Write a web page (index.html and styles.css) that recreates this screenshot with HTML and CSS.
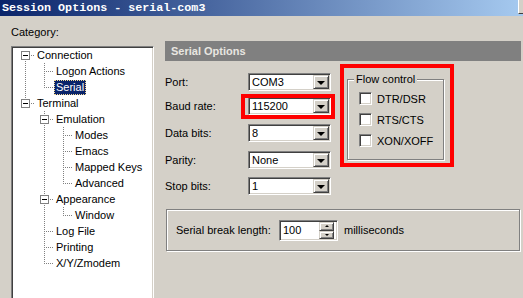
FILE: index.html
```html
<!DOCTYPE html>
<html lang="en">
<head>
  <meta charset="UTF-8">
  <title>Session Options - serial-com3</title>
  <link rel="stylesheet" href="styles.css">
</head>
<body>
  <div class="titlebar">
    <span class="title">Session Options - serial-com3</span>
    <span class="titlebtn"></span>
  </div>

  <div class="dialog">
    <div class="category">
      <div class="cat-label">Category:</div>
      <div class="tree">
        <div class="node"><span class="ln first"><span class="exp"></span></span><span class="text">Connection</span></div>
        <div class="node"><span class="ln pipe"></span><span class="ln tee"></span><span class="text">Logon Actions</span></div>
        <div class="node"><span class="ln pipe"></span><span class="ln corner"></span><span class="text selected">Serial</span></div>
        <div class="node"><span class="ln corner"><span class="exp"></span></span><span class="text">Terminal</span></div>
        <div class="node"><span class="ln"></span><span class="ln tee"><span class="exp"></span></span><span class="text">Emulation</span></div>
        <div class="node"><span class="ln"></span><span class="ln pipe"></span><span class="ln tee"></span><span class="text">Modes</span></div>
        <div class="node"><span class="ln"></span><span class="ln pipe"></span><span class="ln tee"></span><span class="text">Emacs</span></div>
        <div class="node"><span class="ln"></span><span class="ln pipe"></span><span class="ln tee"></span><span class="text">Mapped Keys</span></div>
        <div class="node"><span class="ln"></span><span class="ln pipe"></span><span class="ln corner"></span><span class="text">Advanced</span></div>
        <div class="node"><span class="ln"></span><span class="ln tee"><span class="exp"></span></span><span class="text">Appearance</span></div>
        <div class="node"><span class="ln"></span><span class="ln pipe"></span><span class="ln corner"></span><span class="text">Window</span></div>
        <div class="node"><span class="ln"></span><span class="ln tee"></span><span class="text">Log File</span></div>
        <div class="node"><span class="ln"></span><span class="ln tee"></span><span class="text">Printing</span></div>
        <div class="node"><span class="ln"></span><span class="ln corner"></span><span class="text">X/Y/Zmodem</span></div>
      </div>
    </div>

    <div class="options">
      <div class="panel-head">Serial Options</div>

      <div class="settings">
        <div class="fields">
          <span class="field-label">Port:</span>
          <span class="combo"><span class="value">COM3</span><span class="drop"></span></span>

          <span class="field-label">Baud rate:</span>
          <span class="combo"><span class="value">115200</span><span class="drop"></span><span class="mark baud-mark"></span></span>

          <span class="field-label">Data bits:</span>
          <span class="combo"><span class="value">8</span><span class="drop"></span></span>

          <span class="field-label">Parity:</span>
          <span class="combo"><span class="value">None</span><span class="drop"></span></span>

          <span class="field-label">Stop bits:</span>
          <span class="combo"><span class="value">1</span><span class="drop"></span></span>
        </div>

        <div class="flow-wrap">
          <fieldset class="flow">
            <legend>Flow control</legend>
            <label class="check"><span class="checkbox"></span>DTR/DSR</label>
            <label class="check"><span class="checkbox"></span>RTS/CTS</label>
            <label class="check"><span class="checkbox"></span>XON/XOFF</label>
          </fieldset>
          <span class="mark flow-mark"></span>
        </div>
      </div>

      <div class="break-group">
        <span class="break-label">Serial break length:</span>
        <span class="spin">
          <span class="value">100</span>
          <span class="spin-btns">
            <span class="spin-btn up"></span>
            <span class="spin-btn down"></span>
          </span>
        </span>
        <span class="unit">milliseconds</span>
      </div>
    </div>
  </div>
</body>
</html>
```

FILE: styles.css
```css
body {
  margin: 0;
  width: 523px;
  height: 298px;
  overflow: hidden;
  background-color: #d4d0c8;
  font-family: "Liberation Sans", Arial, sans-serif;
  font-size: 11px;
  color: #000;
}

/* title bar */
.titlebar {
  height: 16px;
  display: flex;
  justify-content: space-between;
  background: linear-gradient(to right, #0a246a, #a6caf0);
}
.title {
  padding: 1px 0 0 2px;
  font-family: "Liberation Mono", "Courier New", monospace;
  font-weight: bold;
  font-size: 11.7px;
  line-height: 14px;
  color: #fff;
  white-space: nowrap;
}
.titlebtn {
  width: 4px;
  height: 13px;
  background-color: #d4d0c8;
  border-left: 1px solid #fff;
  border-bottom: 1px solid #404040;
}

.dialog {
  display: flex;
  gap: 11px;
  height: 282px;
  padding-left: 11px;
}

/* category tree */
.category {
  width: 143px;
  display: flex;
  flex-direction: column;
}
.cat-label {
  padding-top: 9px;
  line-height: 14px;
}
.tree {
  flex: 1;
  margin-top: 7px;
  box-sizing: border-box;
  background-color: #fff;
  border: 1px solid;
  border-bottom: none;
  border-color: #808080 #fff #fff #808080;
  box-shadow: inset 1px 1px #404040, inset -1px 0 #d4d0c8;
  padding: 0 1px;
}
.node {
  display: flex;
  height: 16px;
  align-items: center;
}
.ln {
  width: 19px;
  height: 16px;
  flex-shrink: 0;
  box-sizing: border-box;
  display: flex;
  align-items: center;
  padding-left: 8px;
  background-repeat: no-repeat;
}
.ln.tee,
.ln.corner,
.ln.first {
  width: 22px;
}
.pipe {
  background-image: repeating-linear-gradient(#808080 0 1px, transparent 1px 2px);
  background-position: 12px 0;
  background-size: 1px 16px;
}
.tee {
  background-image:
    repeating-linear-gradient(#808080 0 1px, transparent 1px 2px),
    repeating-linear-gradient(to right, #808080 0 1px, transparent 1px 2px);
  background-position: 12px 0, 12px 8px;
  background-size: 1px 16px, 10px 1px;
}
.corner {
  background-image:
    repeating-linear-gradient(#808080 0 1px, transparent 1px 2px),
    repeating-linear-gradient(to right, #808080 0 1px, transparent 1px 2px);
  background-position: 12px 0, 12px 8px;
  background-size: 1px 8px, 10px 1px;
}
.first {
  background-image:
    repeating-linear-gradient(#808080 0 1px, transparent 1px 2px),
    repeating-linear-gradient(to right, #808080 0 1px, transparent 1px 2px);
  background-position: 12px 8px, 12px 8px;
  background-size: 1px 8px, 10px 1px;
}
.exp {
  width: 9px;
  height: 9px;
  box-sizing: border-box;
  border: 1px solid #808080;
  background-color: #fff;
  display: flex;
  align-items: center;
  justify-content: center;
}
.exp:before {
  content: "";
  width: 5px;
  height: 1px;
  background-color: #000;
}
.text {
  padding: 0 1px;
  border: 1px dotted transparent;
  line-height: 13px;
  white-space: nowrap;
}
.text.selected {
  background-color: #0a246a;
  color: #fff;
  border-color: #f5db95;
}

/* right side */
.options {
  width: 356px;
  padding-top: 25px;
}
.panel-head {
  height: 20px;
  line-height: 20px;
  padding-left: 6px;
  background-color: #808080;
  color: #e8e6e0;
  font-weight: bold;
}
.settings {
  display: flex;
  margin-top: 12px;
}
.fields {
  display: grid;
  grid-template-columns: 83px 83px;
  grid-template-rows: 24px 27px 27px 26px 18px;
  align-items: start;
}
.field-label {
  line-height: 18px;
}
.combo {
  position: relative;
  display: flex;
  height: 18px;
  box-sizing: border-box;
  background-color: #fff;
  border: 1px solid;
  border-color: #808080 #fff #fff #808080;
  box-shadow: inset 1px 1px #404040, inset -1px -1px #d4d0c8;
  padding: 1px;
}
.combo .value {
  flex: 1;
  padding-left: 2px;
  line-height: 14px;
}
.drop,
.spin-btn {
  box-sizing: border-box;
  background-color: #d4d0c8;
  border: 1px solid;
  border-color: #d4d0c8 #404040 #404040 #d4d0c8;
  box-shadow: inset 1px 1px #fff, inset -1px -1px #808080;
  display: flex;
  align-items: center;
  justify-content: center;
}
.drop {
  width: 16px;
  height: 14px;
}
.drop:before {
  content: "";
  border-left: 4px solid transparent;
  border-right: 4px solid transparent;
  border-top: 4px solid #000;
  margin-top: 1px;
}

/* red annotation frames */
.mark {
  position: absolute;
  box-sizing: border-box;
  border: 4px solid #ff0000;
  pointer-events: none;
}
.baud-mark {
  left: -8px;
  top: -4px;
  width: 94px;
  height: 25px;
}
.flow-wrap {
  position: relative;
  margin-left: 16px;
}
.flow-mark {
  left: -7px;
  top: -9px;
  width: 114px;
  height: 103px;
}
.flow {
  margin: 0;
  width: 97px;
  box-sizing: border-box;
  padding: 2px 0 8px 0;
  border: 1px solid #808080;
  box-shadow: inset 1px 1px #fff, 1px 1px #fff;
}
.flow legend {
  margin-left: 6px;
  padding: 0 2px;
  line-height: 13px;
  background-color: #d4d0c8;
}
.check {
  display: flex;
  align-items: center;
  gap: 5px;
  height: 21px;
  padding-left: 11px;
}
.checkbox {
  width: 13px;
  height: 13px;
  box-sizing: border-box;
  background-color: #fff;
  border: 1px solid;
  border-color: #808080 #fff #fff #808080;
  box-shadow: inset 1px 1px #404040, inset -1px -1px #d4d0c8;
}

/* serial break */
.break-group {
  display: flex;
  align-items: center;
  margin: 14px 1px 0;
  height: 42px;
  box-sizing: border-box;
  padding-left: 9px;
  border: 1px solid #808080;
  box-shadow: inset 1px 1px #fff, 1px 1px #fff;
}
.break-label {
  width: 103px;
}
.spin {
  display: flex;
  width: 59px;
  height: 21px;
  box-sizing: border-box;
  background-color: #fff;
  border: 1px solid;
  border-color: #808080 #fff #fff #808080;
  box-shadow: inset 1px 1px #404040, inset -1px -1px #d4d0c8;
  padding: 1px;
}
.spin .value {
  flex: 1;
  padding-left: 2px;
  line-height: 17px;
}
.spin-btns {
  display: flex;
  flex-direction: column;
  width: 15px;
  margin-right: 2px;
}
.spin-btn {
  height: 9px;
}
.spin-btn.down {
  height: 8px;
}
.spin-btn.up:before {
  content: "";
  border-left: 2px solid transparent;
  border-right: 2px solid transparent;
  border-bottom: 2px solid #000;
}
.spin-btn.down:before {
  content: "";
  border-left: 2px solid transparent;
  border-right: 2px solid transparent;
  border-top: 2px solid #000;
}
.unit {
  margin-left: 6px;
}
```
